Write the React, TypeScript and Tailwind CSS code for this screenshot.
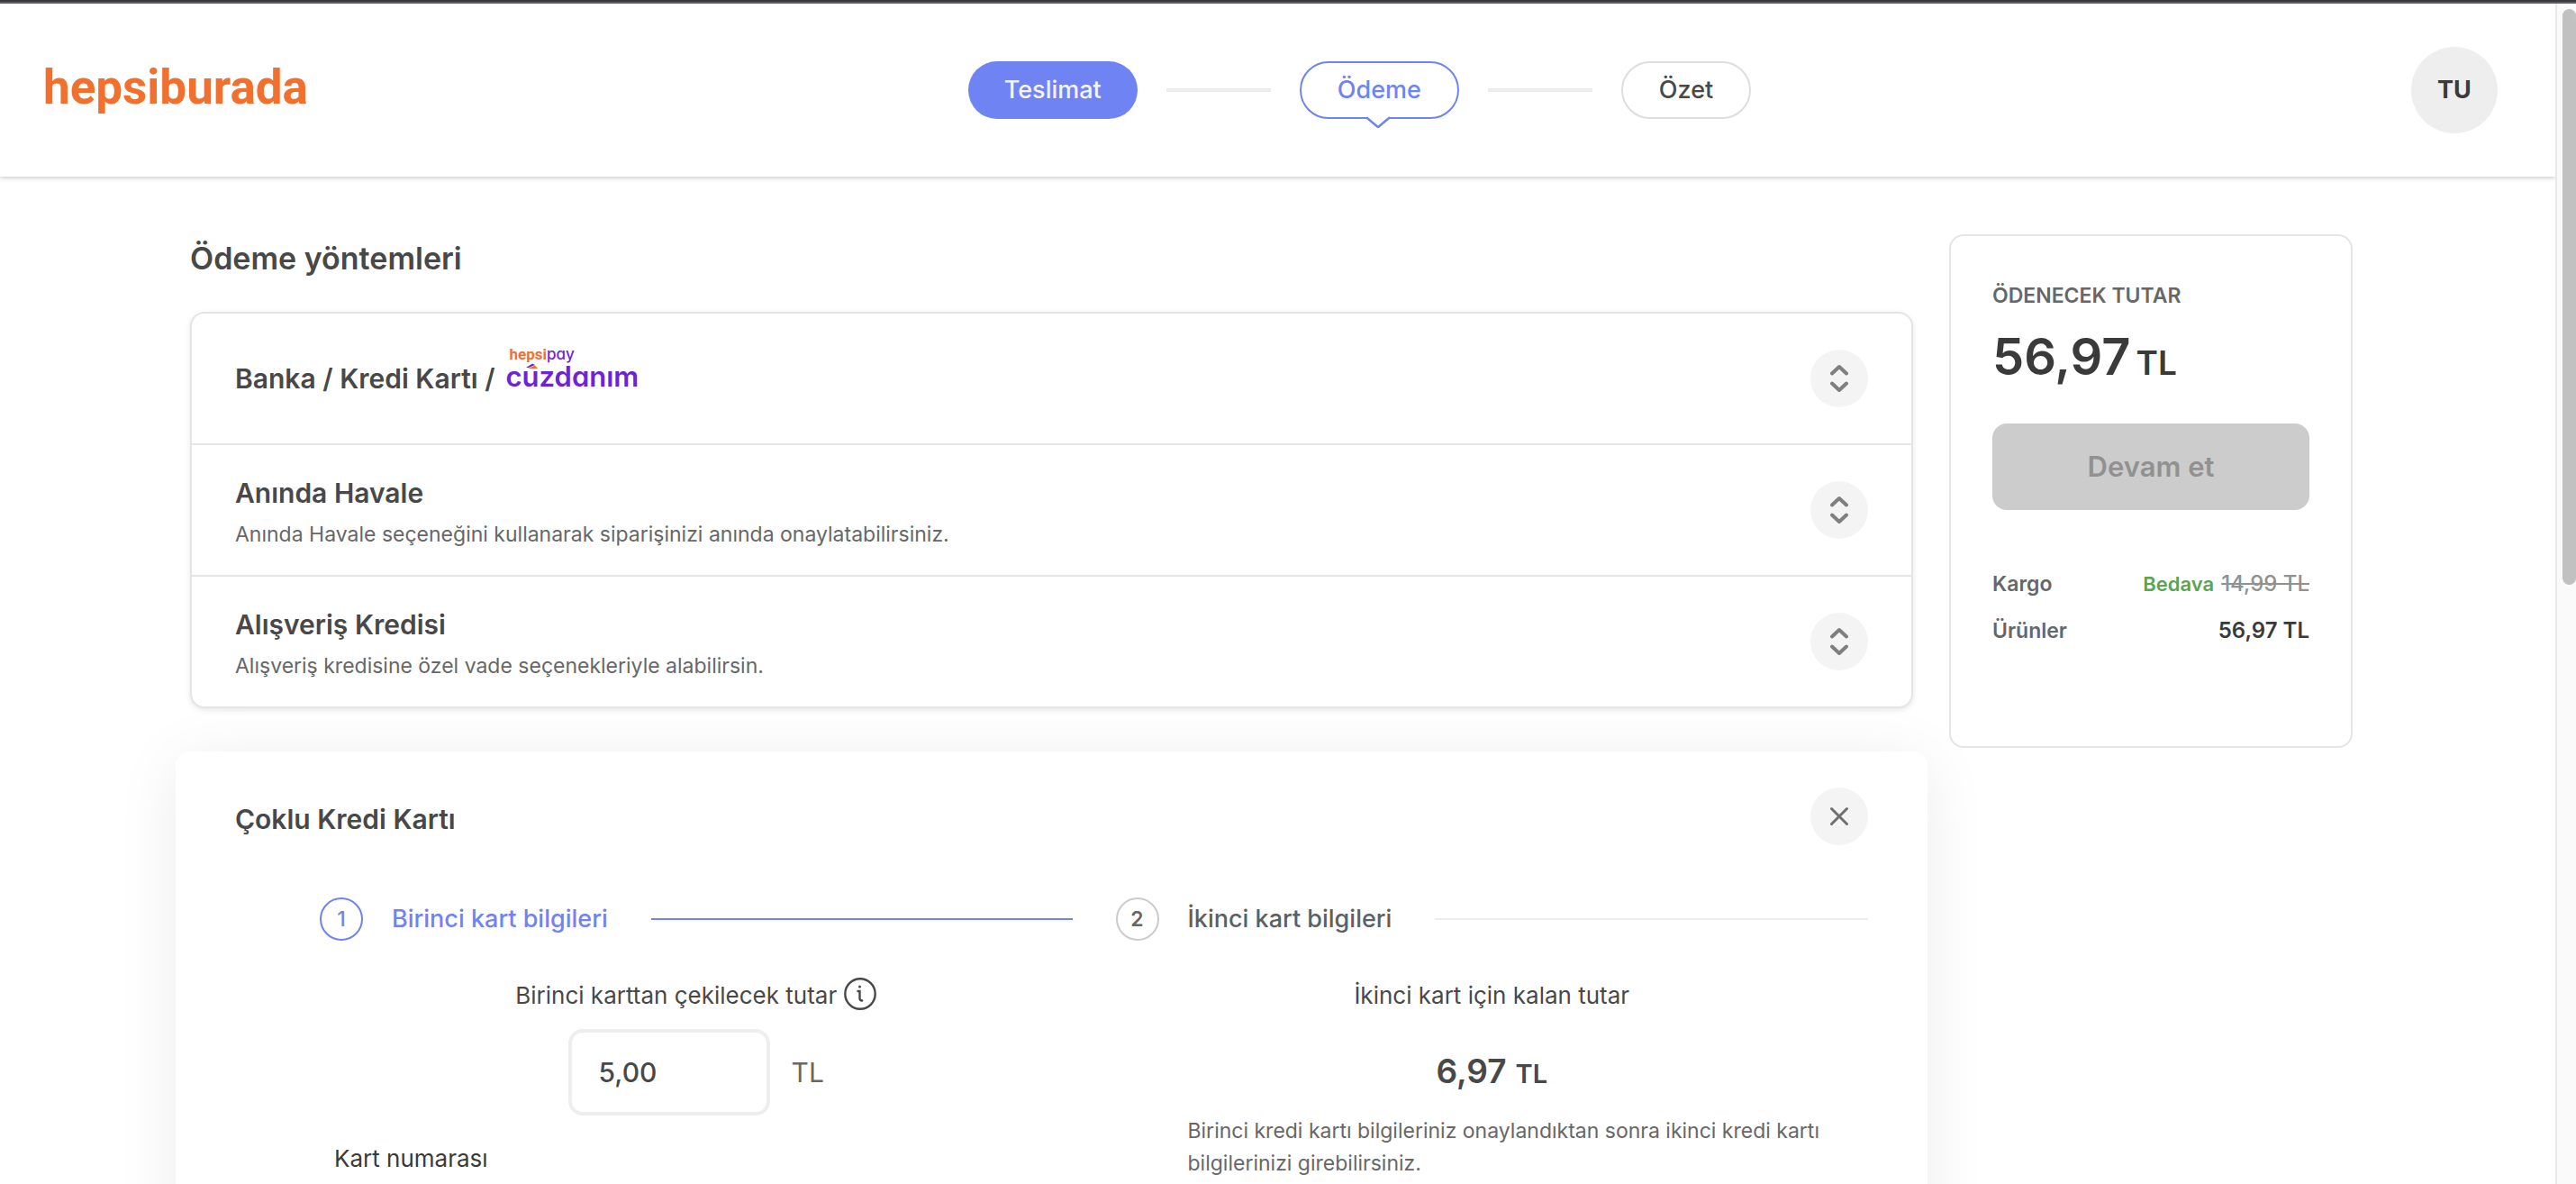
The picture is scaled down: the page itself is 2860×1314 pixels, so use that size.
import type { ReactNode } from 'react';

function HepsipayLogo() {
  return (
    <span className="relative mb-1 ml-3 inline-flex flex-col text-[#6f23d9]">
      <span className="absolute bottom-full left-1 flex text-[17px] leading-[12px]">
        <span className="font-['Roboto'] font-bold text-[#f2702d]">hepsi</span>
        <span className="font-medium [font-feature-settings:'cv11']">pay</span>
      </span>
      <span className="text-[31px] leading-[38px] font-semibold [font-feature-settings:'cv11']">cuzdanım</span>
      <svg className="absolute top-1 left-[22px]" width="14" height="7" viewBox="0 0 14 7" aria-hidden="true">
        <path d="M0 5 7 0.500 10 2 3 5Z" fill="#6f23d9" />
        <path d="M2 6 10 2.500 13 6Z" fill="#f2702d" />
      </svg>
    </span>
  );
}

function ToggleIcon() {
  return (
    <svg width="24" height="34" viewBox="0 0 24 34" fill="none" stroke="#7f7f7f" strokeWidth="4" strokeLinecap="round" strokeLinejoin="round" aria-hidden="true">
      <path d="M4 11.500 12 4l8 7.500" />
      <path d="M4 22.500 12 30l8-7.500" />
    </svg>
  );
}

function Method({ title, note, extra }: { title: string; note?: string; extra?: ReactNode }) {
  return (
    <li className="box-content flex min-h-36 items-center justify-between px-12">
      <div className={note ? 'pt-1' : ''}>
        <h2 className="flex items-center text-[30px] leading-[50px] font-semibold">
          {title}
          {extra}
        </h2>
        {note && <p className="text-[23px] leading-[42px] text-[#676767]">{note}</p>}
      </div>
      <button type="button" aria-label={title} className="flex size-16 items-center justify-center rounded-full bg-[#f4f4f4]">
        <ToggleIcon />
      </button>
    </li>
  );
}

function CardStep({ number, label, active }: { number: string; label: string; active?: boolean }) {
  return (
    <div className="flex items-center">
      <span
        className={
          active
            ? 'flex size-12 items-center justify-center rounded-full border-2 border-[#7083f3] text-[23px] font-medium text-[#7083f3]'
            : 'flex size-12 items-center justify-center rounded-full border-2 border-[#cbcbcb] text-[23px] font-semibold text-[#676767]'
        }
      >
        {number}
      </span>
      <h3 className={active ? 'ml-8 text-[27px] font-medium text-[#7083f3]' : 'ml-8 text-[27px] font-medium text-[#5f5f5f]'}>{label}</h3>
      <span className={active ? 'ml-12 h-0.5 flex-1 bg-[#7083f3]' : 'ml-12 h-0.5 flex-1 bg-[#ececec]'} />
    </div>
  );
}

function Header() {
  return (
    <header className="relative flex h-48 items-center justify-between bg-white pr-16 pl-12 shadow-[0_1px_5px_rgba(0,0,0,0.25)]">
      <a href="#" className="w-[294px] pb-1.5 font-['Roboto'] text-[53px] leading-[60px] font-bold text-[#f2702d]">
        hepsiburada
      </a>
      <nav className="flex items-center gap-8 text-[27px] font-medium">
        <a href="#teslimat" className="flex h-16 items-center rounded-full bg-[#7083f3] px-10 text-[#f3f3fb]">
          Teslimat
        </a>
        <span className="h-1 w-[116px] bg-[#ececec]" />
        <a href="#odeme" aria-current="step" className="relative flex h-16 items-center rounded-full border-2 border-[#7083f3] px-10 text-[#7083f3]">
          Ödeme
          <svg className="absolute top-full left-1/2 -mt-0.5 -ml-3.5" width="26" height="16" viewBox="0 0 26 16" fill="none" aria-hidden="true">
            <path d="M2 0h22v3L13 13 2 3Z" fill="#fff" />
            <path d="M0 3h1L12.200 12.500Q13 13.200 13.800 12.500L25 3h1" stroke="#7083f3" strokeWidth="2.500" />
            <path d="M2.500 0h21v2.500h-21Z" fill="#fff" />
          </svg>
        </a>
        <span className="h-1 w-[116px] bg-[#ececec]" />
        <a href="#ozet" className="flex h-16 items-center rounded-full border-2 border-[#dedede] px-10 text-[#484848]">
          Özet
        </a>
      </nav>
      <button type="button" className="size-24 rounded-full bg-[#eeeeee] text-[27px] font-bold text-[#3a3a3a]">
        TU
      </button>
    </header>
  );
}

function SplitCard() {
  return (
    <section className="-mx-4 mt-12 rounded-2xl bg-white px-[66px] pt-10 pb-32 shadow-[0_10px_70px_rgba(0,0,0,0.08)]">
      <div className="flex items-center justify-between">
        <h2 className="pt-1.5 text-[30px] leading-[50px] font-semibold">Çoklu Kredi Kartı</h2>
        <button type="button" aria-label="Kapat" className="flex size-16 items-center justify-center rounded-full bg-[#f4f4f4]">
          <svg width="24" height="24" viewBox="0 0 24 24" stroke="#6f6f6f" strokeWidth="3" strokeLinecap="round" aria-hidden="true">
            <path d="M3.500 3.500l17 17M20.500 3.500l-17 17" />
          </svg>
        </button>
      </div>
      <div className="mt-[58px] ml-[94px] grid grid-cols-2 gap-12">
        <div>
          <CardStep number="1" label="Birinci kart bilgileri" active />
          <div className="mt-[41px] flex items-center justify-center gap-2">
            <label htmlFor="tutar" className="text-[26px] leading-[40px]">
              Birinci karttan çekilecek tutar
            </label>
            <svg className="mb-1" width="36" height="36" viewBox="0 0 36 36" fill="none" stroke="#484848" role="img" aria-label="Bilgi">
              <circle cx="18" cy="18" r="16.700" strokeWidth="2.400" />
              <circle cx="17.500" cy="10" r="1.500" fill="#484848" stroke="none" />
              <path d="M15.500 15h2v8q0 2.500 2.700 2.500" strokeWidth="2.400" strokeLinecap="round" />
            </svg>
          </div>
          <div className="mt-[17px] flex items-center justify-center gap-6 text-[30px]">
            <input id="tutar" defaultValue="5,00" className="h-24 w-56 rounded-2xl border-4 border-[#eeeeee] px-[30px] font-medium" />
            <span className="text-[#676767]">TL</span>
          </div>
          <label htmlFor="kart" className="mt-7 block pl-4 text-[26px] leading-[40px] text-[#3a3a3a]">
            Kart numarası
          </label>
          <input id="kart" className="mt-4 ml-4 h-24 w-full rounded-2xl border-4 border-[#eeeeee] px-8" />
        </div>
        <div>
          <CardStep number="2" label="İkinci kart bilgileri" />
          <p className="mt-[41px] text-center text-[26px] leading-[40px]">İkinci kart için kalan tutar</p>
          <p className="mt-4 flex items-baseline justify-center gap-2.5 text-[37px] leading-[96px] font-semibold">
            6,97
            <span className="text-[29px] leading-[40px]">TL</span>
          </p>
          <p className="pr-10 pl-20 text-[23px] leading-[36px] text-[#676767]">
            Birinci kredi kartı bilgileriniz onaylandıktan sonra ikinci kredi kartı bilgilerinizi girebilirsiniz.
          </p>
        </div>
      </div>
    </section>
  );
}

function Summary() {
  return (
    <aside className="w-[448px] shrink-0 self-start rounded-2xl border-2 border-[#e5e5e5] bg-white px-[46px] pt-[50px] pb-28 text-[#3a3a3a]">
      <h2 className="text-[23px] leading-[32px] font-semibold text-[#676767]">ÖDENECEK TUTAR</h2>
      <p className="mt-5 flex items-baseline gap-1.5 text-[56px] leading-[64px] font-semibold">
        56,97
        <span className="text-[37px] leading-[40px]">TL</span>
      </p>
      <button type="button" disabled className="mt-[42px] h-24 w-full rounded-2xl bg-[#cccccc] text-[31px] font-semibold text-[#919191]">
        Devam et
      </button>
      <dl className="mt-[66px] grid grid-cols-[auto_1fr] gap-y-5 text-[23px] leading-[32px] font-semibold">
        <dt className="text-[#676767]">Kargo</dt>
        <dd className="flex items-baseline justify-end gap-2">
          <span className="text-[22px] text-[#5aa453]">Bedava</span>
          <s className="text-[24px] font-medium text-[#919191]">14,99 TL</s>
        </dd>
        <dt className="text-[#676767]">Ürünler</dt>
        <dd className="text-right text-[24px]">56,97 TL</dd>
      </dl>
    </aside>
  );
}

export default function App() {
  return (
    <div className="flex h-screen flex-col overflow-hidden border-t-2 border-[#38383d] bg-white font-['Inter',sans-serif] text-[#484848]">
      <div className="h-0.5 shrink-0 bg-[#5c5d61]" />
      <div className="flex min-h-0 flex-1">
        <div className="min-w-0 flex-1 overflow-hidden">
          <Header />
          <main className="flex gap-10 pt-16 pr-[225px] pl-[211px]">
            <div className="min-w-0 flex-1">
              <h1 className="mb-8 text-[34px] leading-[54px] font-semibold">Ödeme yöntemleri</h1>
              <ul className="divide-y-2 divide-[#e5e5e5] rounded-2xl border-2 border-[#e5e5e5] bg-white shadow-[0_2px_6px_rgba(0,0,0,0.1)]">
                <Method title="Banka / Kredi Kartı /" extra={<HepsipayLogo />} />
                <Method title="Anında Havale" note="Anında Havale seçeneğini kullanarak siparişinizi anında onaylatabilirsiniz." />
                <Method title="Alışveriş Kredisi" note="Alışveriş kredisine özel vade seçenekleriyle alabilirsin." />
              </ul>
              <SplitCard />
            </div>
            <Summary />
          </main>
        </div>
        <div className="w-[23px] shrink-0 border-l-2 border-[#e8e8e8] bg-[#fafafa] pt-1.5 pl-1.5">
          <div className="h-[49%] rounded-full bg-[#c1c1c1]" />
        </div>
      </div>
    </div>
  );
}
